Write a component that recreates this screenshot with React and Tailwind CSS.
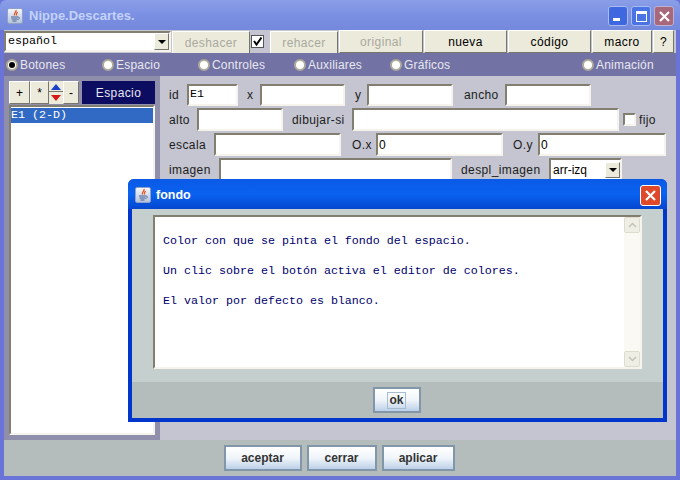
import { useState } from "react";

const sunken = "border-2 border-t-[#827e70] border-l-[#827e70] border-r-[#f6f3ec] border-b-[#f6f3ec] bg-white";
const sans = "font-['Liberation_Sans',sans-serif]";
const mono = "font-['Liberation_Mono',monospace]";

function JavaIcon() {
  return (
    <span className="flex h-[16px] w-[16px] items-center justify-center rounded-[2px] border border-[#8da0c8] bg-gradient-to-b from-[#f4f6fb] to-[#b7c4dc]">
      <svg width="14" height="14" viewBox="0 0 14 14" fill="none">
        <path d="M8 1C9 3 5.500 4 6.500 6.500M9.500 3C8.500 4.500 8 5 8.500 6.500" stroke="#e2561c" strokeWidth="1.300" />
        <path d="M3 8H10M3.500 10H9.500M4.500 12H8.500" stroke="#44608f" strokeWidth="1" />
        <path d="M10 8C12 8 12 10 9.500 10.500" stroke="#44608f" strokeWidth="0.800" />
      </svg>
    </span>
  );
}

function ToolButton({ w, disabled, children }) {
  return (
    <button className={`${w} h-[23px] shrink-0 border border-t-white border-l-white border-r-[#77766c] border-b-[#77766c] bg-[#ecebdb] text-center text-[12px] tracking-[0.4px] ${sans} ${disabled ? "text-[#a9a99f]" : "text-black"}`}>
      {children}
    </button>
  );
}

function BlueButton({ w, children }) {
  return (
    <button className={`${w} h-[26px] shrink-0 border-2 border-[#8296aa] bg-gradient-to-b from-white via-[#f0f5fa] to-[#bcd0e8] text-[12px] font-bold text-[#333333] ${sans}`}>
      {children}
    </button>
  );
}

function SmallButton({ w, children }) {
  return (
    <button className={`${w} border border-t-white border-l-white border-r-[#77766c] border-b-[#77766c] bg-[#ecebdb] text-[12px] text-black ${sans}`}>
      {children}
    </button>
  );
}

function Radio({ label, checked }) {
  return (
    <div className={`flex items-center gap-[2px] pl-[2px] text-[12px] tracking-[0.2px] text-[#e8e8f0] ${sans}`}>
      <span className="flex h-[12px] w-[12px] items-center justify-center rounded-full border-2 border-[#aeaa9c] bg-white">
        {checked && <span className="h-[6px] w-[6px] rounded-full bg-black" />}
      </span>
      {label}
    </div>
  );
}

function Label({ w, children }) {
  return <span className={`${w} shrink-0 text-[12px] tracking-[0.4px] text-[#1c1c1c] ${sans}`}>{children}</span>;
}

function Field({ w, value, sansValue }) {
  return (
    <div className={`${w} ${sunken} flex h-full shrink-0 items-center overflow-hidden pl-[1px] text-black ${sansValue ? `text-[12px] ${sans}` : `text-[11.67px] ${mono}`}`}>
      {value}
    </div>
  );
}

function Row({ h, mt, children }) {
  return <div className={`flex ${h} ${mt} items-center`}>{children}</div>;
}

function ComboArrow({ className = "" }) {
  return (
    <span className={`flex items-center justify-center border border-t-white border-l-white border-r-[#77766c] border-b-[#77766c] bg-[#ecebdb] ${className}`}>
      <span className="h-0 w-0 border-x-[4px] border-t-[4px] border-x-transparent border-t-black" />
    </span>
  );
}

function Dialog() {
  return (
    <div className="absolute left-[128px] top-[179px] flex h-[243px] w-[539px] flex-col rounded-t-[6px] bg-[#0036cc]">
      <div className="flex h-[30px] items-center rounded-t-[6px] bg-gradient-to-b from-[#0a5ae6] via-[#0a62f0] to-[#0546d0] pl-[7px] pr-[6px] pt-[2px]">
        <JavaIcon />
        <span className={`ml-[5px] text-[12.5px] font-bold text-white ${sans}`}>fondo</span>
        <span className="ml-auto flex h-[21px] w-[21px] items-center justify-center rounded-[3px] border border-white bg-[#e0482a]">
          <svg width="13" height="13" viewBox="0 0 13 13">
            <path d="M2 2L11 11M11 2L2 11" stroke="white" strokeWidth="2.200" />
          </svg>
        </span>
      </div>
      <div className="mx-[4px] flex h-[173px] flex-col bg-[#c5cfcd] pl-[21px] pr-[21px] pt-[6px]">
        <div className={`${sunken} flex h-[154px] shrink-0`}>
          <div className={`flex-1 pl-[8px] pt-[17px] text-[11.67px] leading-[15px] text-[#00006e] ${mono}`}>
            <p>Color con que se pinta el fondo del espacio.</p>
            <p className="mt-[15px]">Un clic sobre el botón activa el editor de colores.</p>
            <p className="mt-[15px]">El valor por defecto es blanco.</p>
          </div>
          <div className="flex w-[16px] flex-col justify-between bg-[#faf9f3]">
            <span className="flex h-[16px] items-center justify-center rounded-[2px] border border-[#dcdccf] bg-[#efeee4]">
              <svg width="9" height="6" viewBox="0 0 9 6" fill="none"><path d="M1 5L4.500 1.500L8 5" stroke="#c3c3b6" strokeWidth="1.500" /></svg>
            </span>
            <span className="flex h-[16px] items-center justify-center rounded-[2px] border border-[#dcdccf] bg-[#efeee4]">
              <svg width="9" height="6" viewBox="0 0 9 6" fill="none"><path d="M1 1L4.500 4.500L8 1" stroke="#c3c3b6" strokeWidth="1.500" /></svg>
            </span>
          </div>
        </div>
      </div>
      <div className="mx-[4px] flex h-[36px] items-center justify-center bg-[#b4bdbb] pr-[2px]">
        <button className={`flex h-[26px] w-[48px] items-center justify-center border-2 border-[#8296aa] bg-gradient-to-b from-white via-[#f0f5fa] to-[#bcd0e8] text-[12px] font-bold text-[#333333] ${sans}`}>
          <span className="border border-[#a8bdd4] px-[1px] leading-[15px]">ok</span>
        </button>
      </div>
    </div>
  );
}

export default function App() {
  const [lang] = useState("español");

  return (
    <div className="relative flex h-[480px] w-[680px] flex-col overflow-hidden bg-[#6a74d8]">
      <div className="flex h-[30px] shrink-0 items-center rounded-t-[6px] bg-gradient-to-b from-[#8a9ee8] via-[#7b90e2] to-[#7488dc] pl-[7px] pr-[6px] pt-[2px]">
        <JavaIcon />
        <span className={`ml-[6px] text-[13px] font-bold text-[#c3d2fa] ${sans}`}>Nippe.Descartes.</span>
        <div className="ml-auto flex gap-[3px]">
          <span className="flex h-[20px] w-[20px] items-end rounded-[3px] border border-[#a8bcf0] bg-[#3f68e0] pb-[4px] pl-[4px]">
            <span className="h-[3px] w-[7px] bg-white" />
          </span>
          <span className="flex h-[20px] w-[20px] items-center justify-center rounded-[3px] border border-[#a8bcf0] bg-[#4a74e4]">
            <span className="h-[11px] w-[11px] border border-t-[3px] border-white" />
          </span>
          <span className="flex h-[20px] w-[20px] items-center justify-center rounded-[3px] border border-[#c0b0d0] bg-[#a8687c]">
            <svg width="13" height="13" viewBox="0 0 13 13">
              <path d="M2 2L11 11M11 2L2 11" stroke="white" strokeWidth="2.200" />
            </svg>
          </span>
        </div>
      </div>

      <div className="mx-[4px] flex min-h-0 flex-1 flex-col">
        <div className="flex h-[23px] shrink-0 items-center bg-[#c4c5d0]">
          <div className={`${sunken} flex h-[21px] w-[167px] shrink-0 items-center justify-between pl-[2px] text-[11.67px] text-black ${mono}`}>
            {lang}
            <ComboArrow className="h-[17px] w-[15px]" />
          </div>
          <div className="ml-[1px]"><ToolButton w="w-[78px]" disabled>deshacer</ToolButton></div>
          <span className="ml-[1px] flex h-[13px] w-[13px] shrink-0 items-center justify-center border border-[#555555] bg-white">
            <svg width="11" height="11" viewBox="0 0 11 11" fill="none"><path d="M2 5L4.500 8.500L9.500 1.500" stroke="black" strokeWidth="2" /></svg>
          </span>
          <div className="ml-[6px]"><ToolButton w="w-[68px]" disabled>rehacer</ToolButton></div>
          <div className="ml-[1px] flex gap-[1px]">
            <ToolButton w="w-[84px]" disabled>original</ToolButton>
            <ToolButton w="w-[83px]">nueva</ToolButton>
            <ToolButton w="w-[83px]">código</ToolButton>
            <ToolButton w="w-[60px]">macro</ToolButton>
            <ToolButton w="w-[21px]">?</ToolButton>
          </div>
        </div>

        <div className="grid h-[23px] shrink-0 grid-cols-7 items-center bg-[#7272a4]">
          <Radio label="Botones" checked />
          <Radio label="Espacio" />
          <Radio label="Controles" />
          <Radio label="Auxiliares" />
          <Radio label="Gráficos" />
          <span />
          <Radio label="Animación" />
        </div>

        <div className="flex min-h-0 flex-1">
          <div className="flex w-[156px] shrink-0 flex-col bg-[#8f8fab] p-[5px]">
            <div className="flex h-[23px] shrink-0">
              <SmallButton w="w-[21px]">+</SmallButton>
              <SmallButton w="w-[19px]">*</SmallButton>
              <div className="flex w-[14px] flex-col items-center justify-between bg-[#ecebdb] py-[1px]">
                <span className="flex h-[10px] w-[14px] items-center justify-center border-b border-[#77766c]">
                  <span className="h-0 w-0 border-x-[5px] border-b-[6px] border-x-transparent border-b-[#1a3fc8]" />
                </span>
                <span className="flex h-[10px] w-[14px] items-center justify-center">
                  <span className="h-0 w-0 border-x-[5px] border-t-[6px] border-x-transparent border-t-[#d81818]" />
                </span>
              </div>
              <SmallButton w="w-[16px]">-</SmallButton>
              <div className={`ml-[3px] flex w-[73px] items-center justify-center bg-[#0c0c60] text-[12px] tracking-[0.4px] text-[#e8e8f0] ${sans}`}>Espacio</div>
            </div>
            <div className={`${sunken} mt-[1px] flex-1 pt-[1px]`}>
              <div className={`h-[15px] bg-[#316ac5] text-[11.67px] leading-[15px] text-white ${mono}`}>E1 (2-D)</div>
            </div>
          </div>

          <div className="flex-1 bg-[#c4c5d0] pl-[9px] pt-[8px]">
            <Row h="h-[22px]">
              <Label w="w-[18px]">id</Label>
              <Field w="w-[51px]" value="E1" />
              <Label w="w-[22px] pl-[9px]">x</Label>
              <Field w="w-[85px]" />
              <Label w="w-[22px] pl-[10px]">y</Label>
              <Field w="w-[86px]" />
              <Label w="w-[52px] pl-[11px]">ancho</Label>
              <Field w="w-[86px]" />
            </Row>
            <Row h="h-[23px]" mt="mt-[2px]">
              <Label w="w-[28px]">alto</Label>
              <Field w="w-[86px]" />
              <Label w="w-[69px] pl-[9px]">dibujar-si</Label>
              <Field w="w-[267px]" />
              <span className={`${sunken} ml-[4px] h-[13px] w-[13px] shrink-0`} />
              <Label w="w-[30px] pl-[3px]">fijo</Label>
            </Row>
            <Row h="h-[23px]" mt="mt-[2px]">
              <Label w="w-[45px]">escala</Label>
              <Field w="w-[127px]" />
              <Label w="w-[35px] pl-[11px]">O.x</Label>
              <Field w="w-[127px]" value="0" sansValue />
              <Label w="w-[35px] pl-[10px]">O.y</Label>
              <Field w="w-[128px]" value="0" sansValue />
            </Row>
            <Row h="h-[24px]" mt="mt-[2px]">
              <Label w="w-[50px]">imagen</Label>
              <Field w="w-[233px]" />
              <Label w="w-[97px] pl-[9px]">despl_imagen</Label>
              <div className={`${sunken} flex h-full w-[73px] shrink-0 items-center justify-between pl-[2px] text-[12px] text-black ${sans}`}>
                arr-izq
                <ComboArrow className="h-[16px] w-[15px]" />
              </div>
            </Row>
          </div>
        </div>

        <div className="flex h-[36px] shrink-0 items-center justify-center gap-[5px] bg-[#b4bdbb] pr-[2px]">
          <BlueButton w="w-[78px]">aceptar</BlueButton>
          <BlueButton w="w-[70px]">cerrar</BlueButton>
          <BlueButton w="w-[73px]">aplicar</BlueButton>
        </div>
      </div>
      <div className="h-[4px] shrink-0" />

      <Dialog />
    </div>
  );
}
